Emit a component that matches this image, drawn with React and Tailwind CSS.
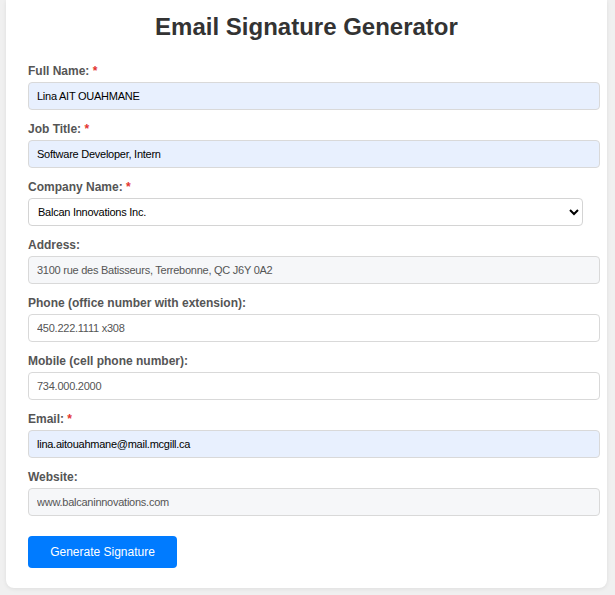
import React from "react";

const fields = [
  { label: "Full Name:", req: true, value: "Lina AIT OUAHMANE", kind: "auto" },
  { label: "Job Title:", req: true, value: "Software Developer, Intern", kind: "auto" },
  { label: "Company Name:", req: true, value: "Balcan Innovations Inc.", kind: "select" },
  { label: "Address:", value: "3100 rue des Batisseurs, Terrebonne, QC J6Y 0A2", kind: "ro" },
  { label: "Phone (office number with extension):", value: "450.222.1111 x308", kind: "plain" },
  { label: "Mobile (cell phone number):", value: "734.000.2000", kind: "plain" },
  { label: "Email:", req: true, value: "lina.aitouahmane@mail.mcgill.ca", kind: "auto" },
  { label: "Website:", value: "www.balcaninnovations.com", kind: "ro" },
];

function Field({ f }) {
  let control;
  if (f.kind === "select") {
    control = (
      <select
        defaultValue={f.value}
        className="block h-[28px] w-[555px] rounded-[4px] border border-[#d4d4d4] bg-white pl-[5px] text-[11px] tracking-[-0.25px] text-black"
      >
        <option>{f.value}</option>
      </select>
    );
  } else {
    const cls =
      f.kind === "auto"
        ? "bg-[#e8f0fe] text-black"
        : f.kind === "ro"
        ? "bg-[#f6f7f9] text-[#555]"
        : "bg-white text-[#555]";
    control = (
      <input
        readOnly
        value={f.value}
        className={`block h-[28px] w-[572px] rounded-[4px] border border-[#d9d9d9] pl-[8px] text-[11px] tracking-[-0.25px] outline-none ${cls}`}
      />
    );
  }
  return (
    <div className="mb-[12px]">
      <label className="mb-[4px] block text-[12px] font-bold leading-[14px] text-[#555]">
        {f.label}
        {f.req && <span className="text-[#e3342f]"> *</span>}
      </label>
      {control}
    </div>
  );
}

export default function App() {
  return (
    <div
      className="min-h-[595px] bg-[#f0f0f0] pb-[6px] pl-[6px] pr-[8px]"
      style={{ fontFamily: '"Liberation Sans", Arial, sans-serif' }}
    >
      <div className="rounded-b-[8px] bg-white px-[22px] pb-[20px] pt-[13px] shadow-[0_1px_4px_rgba(0,0,0,0.08)]">
        <h2 className="mb-[23px] text-center text-[24px] font-bold leading-[28px] text-[#333]">
          Email Signature Generator
        </h2>
        {fields.map((f) => (
          <Field key={f.label} f={f} />
        ))}
        <button className="mt-[8px] h-[32px] w-[149px] rounded-[4px] bg-[#007bff] text-[12px] text-white">
          Generate Signature
        </button>
      </div>
    </div>
  );
}
